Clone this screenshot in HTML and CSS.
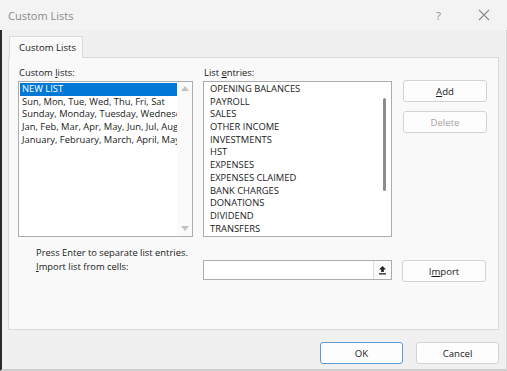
FILE: index.html
```html
<!DOCTYPE html>
<html lang="en">
<head>
    <meta charset="UTF-8">
    <title>Custom Lists</title>
    <link rel="stylesheet" href="styles.css">
</head>
<body>
    <div class="dialog">
        <div class="titlebar">
            <span class="title">Custom Lists</span>
            <span class="help">?</span>
            <svg class="close" width="12" height="12" viewBox="0 0 12 12">
                <path d="M1 1 L11 11 M11 1 L1 11" stroke="#8a8a8a" stroke-width="1.1" fill="none"/>
            </svg>
        </div>
        <div class="content">
            <div class="tabs">
                <div class="tab">Custom Lists</div>
            </div>
            <div class="panel">
                <div class="columns">
                    <div class="col col-lists">
                        <div class="label">Custom <u>l</u>ists:</div>
                        <div class="listbox lists">
                            <ul class="items">
                                <li class="selected">NEW LIST</li>
                                <li>Sun, Mon, Tue, Wed, Thu, Fri, Sat</li>
                                <li>Sunday, Monday, Tuesday, Wednesday, Thursday, Friday, Saturday</li>
                                <li>Jan, Feb, Mar, Apr, May, Jun, Jul, Aug, Sep, Oct, Nov, Dec</li>
                                <li>January, February, March, April, May, June, July</li>
                            </ul>
                            <div class="scrollbar">
                                <span class="arrow up"></span>
                                <span class="arrow down"></span>
                            </div>
                        </div>
                    </div>
                    <div class="col col-entries">
                        <div class="label">List <u>e</u>ntries:</div>
                        <div class="listbox entries">
                            <ul class="items">
                                <li>OPENING BALANCES</li>
                                <li>PAYROLL</li>
                                <li>SALES</li>
                                <li>OTHER INCOME</li>
                                <li>INVESTMENTS</li>
                                <li>HST</li>
                                <li>EXPENSES</li>
                                <li>EXPENSES CLAIMED</li>
                                <li>BANK CHARGES</li>
                                <li>DONATIONS</li>
                                <li>DIVIDEND</li>
                                <li>TRANSFERS</li>
                            </ul>
                            <div class="thin-scroll">
                                <span class="thumb"></span>
                            </div>
                        </div>
                    </div>
                    <div class="col col-buttons">
                        <button class="btn"><u>A</u>dd</button>
                        <button class="btn disabled">Delete</button>
                    </div>
                </div>
                <div class="import-row">
                    <div class="hints">
                        <div>Press Enter to separate list entries.</div>
                        <div><u>I</u>mport list from cells:</div>
                    </div>
                    <div class="range-input">
                        <span class="range-btn">
                            <svg width="9" height="10" viewBox="0 0 9 10">
                                <path d="M4.5 1 L1 4.5 H3.2 V7 H5.8 V4.5 H8 Z" fill="#222"/>
                                <rect x="1" y="8.2" width="7" height="1.3" fill="#222"/>
                            </svg>
                        </span>
                    </div>
                    <button class="btn">I<u>m</u>port</button>
                </div>
            </div>
            <div class="footer">
                <button class="btn btn-wide default">OK</button>
                <button class="btn btn-wide">Cancel</button>
            </div>
        </div>
    </div>
</body>
</html>
```

FILE: styles.css
```css
:root {
    --window-bg: #f0f0f0;
    --title-bg: #f3f3f3;
    --panel-bg: #f9f9f9;
    --border: #dadada;
    --list-border: #acacac;
    --text: #1a1a1a;
    --muted: #8a8a8a;
    --accent: #0078d7;
}

html, body {
    margin: 0;
    padding: 0;
}

body {
    font-family: 'Open Sans', 'Noto Sans', sans-serif;
    font-size: 9.4px;
    color: var(--text);
    background: var(--window-bg);
}

.dialog {
    width: 507px;
    height: 371px;
    display: flex;
    flex-direction: column;
    overflow: hidden;
}

.titlebar {
    height: 30px;
    flex: none;
    display: flex;
    align-items: center;
    background: var(--title-bg);
    padding: 0 17px 0 8px;
}

.title {
    font-size: 11px;
    color: var(--muted);
    flex: 1;
}

.help {
    font-size: 11.5px;
    color: var(--muted);
    margin-right: 37px;
}

.content {
    flex: 1;
    display: flex;
    flex-direction: column;
    border-left: 2px solid #2b2b2b;
    border-right: 1px solid #d6d6d6;
    border-bottom: 2px solid #cfcfcf;
    padding: 6px 7px 0 6px;
}

.tabs {
    display: flex;
    height: 21px;
    padding-left: 1px;
}

.tab {
    width: 74px;
    box-sizing: border-box;
    background: var(--panel-bg);
    border: 1px solid var(--border);
    border-bottom: none;
    padding: 4px 0 0 9px;
    font-size: 9.6px;
    position: relative;
    z-index: 1;
    margin-bottom: -1px;
}

.panel {
    height: 273px;
    box-sizing: border-box;
    background: var(--panel-bg);
    border: 1px solid var(--border);
    padding: 9px 9px 0 9px;
}

.columns {
    display: flex;
}

.col-lists {
    width: 175px;
    margin-right: 10px;
}

.col-entries {
    width: 189px;
    margin-right: 11px;
}

.label {
    height: 14px;
    line-height: 12px;
    padding-left: 1px;
}

.listbox {
    height: 156px;
    box-sizing: border-box;
    background: #fff;
    border: 1px solid var(--list-border);
    display: flex;
    overflow: hidden;
}

.items {
    list-style: none;
    margin: 0;
    padding: 1px 0 0 1px;
    flex: 1;
    min-width: 0;
    overflow: hidden;
}

.items li {
    height: 12.7px;
    line-height: 12.7px;
    padding-left: 2px;
    white-space: nowrap;
    overflow: hidden;
    text-overflow: clip;
}

.items li.selected {
    background: var(--accent);
    color: #fff;
}

.entries .items {
    padding: 1px 0 0 4px;
}

.scrollbar {
    width: 15px;
    flex: none;
    background: #fafafa;
    display: flex;
    flex-direction: column;
    justify-content: space-between;
    align-items: center;
    padding: 4px 0 5px;
    box-sizing: border-box;
}

.arrow {
    width: 0;
    height: 0;
    border-left: 4px solid transparent;
    border-right: 4px solid transparent;
}

.arrow.up {
    border-bottom: 5px solid #c2c2c2;
}

.arrow.down {
    border-top: 5px solid #c2c2c2;
}

.thin-scroll {
    width: 14px;
    flex: none;
    display: flex;
    justify-content: center;
    padding-top: 16px;
    box-sizing: border-box;
}

.thumb {
    width: 3px;
    height: 93px;
    background: #8c8c8c;
    border-radius: 2px;
}

.col-buttons {
    display: flex;
    flex-direction: column;
    gap: 9px;
    padding-top: 13px;
}

.btn {
    width: 84px;
    height: 22px;
    box-sizing: border-box;
    font-family: inherit;
    font-size: 9.6px;
    color: var(--text);
    background: #fdfdfd;
    border: 1px solid #d3d3d3;
    border-radius: 3px;
    padding: 0;
}

.btn.disabled {
    color: #a3a3a3;
}

.import-row {
    display: flex;
    align-items: flex-start;
    margin-top: 9px;
}

.hints {
    width: 167px;
    padding-left: 18px;
    line-height: 14px;
}

.range-input {
    width: 189px;
    height: 20px;
    box-sizing: border-box;
    background: #fff;
    border: 1px solid var(--list-border);
    margin-top: 14px;
    margin-right: 10px;
    display: flex;
    justify-content: flex-end;
}

.range-btn {
    width: 18px;
    height: 18px;
    box-sizing: border-box;
    border-left: 1px solid #dcdcdc;
    background: #fbfbfb;
    display: flex;
    align-items: center;
    justify-content: center;
}

.import-row .btn {
    margin-top: 14px;
}

.footer {
    display: flex;
    justify-content: flex-end;
    gap: 13px;
    padding-top: 12px;
}

.btn-wide {
    width: 83px;
}

.btn.default {
    border: 1px solid #5e9ad8;
}
```
